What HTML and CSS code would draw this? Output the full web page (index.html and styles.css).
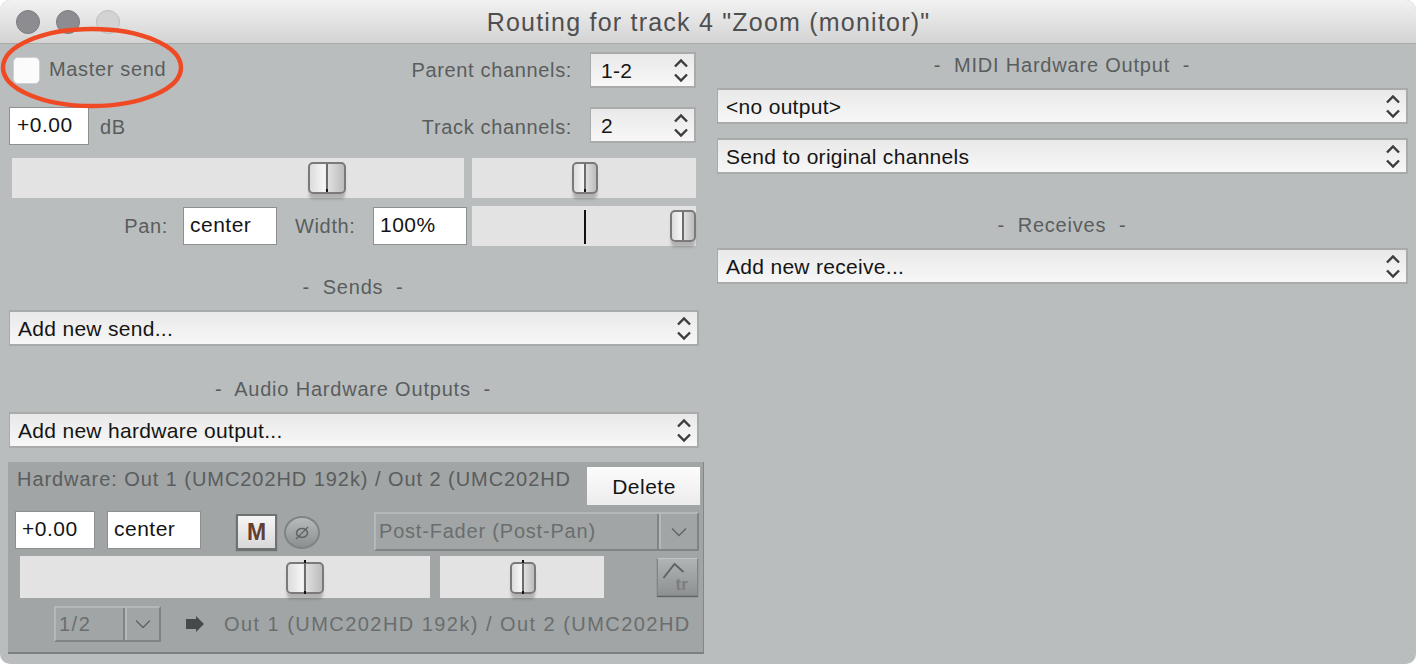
FILE: index.html
```html
<!DOCTYPE html>
<html lang="en">
<head>
    <meta charset="UTF-8">
    <title>Routing for track 4</title>
    <link rel="stylesheet" href="styles.css">
</head>
<body>
    <svg class="defs" width="0" height="0">
        <symbol id="updown" viewBox="0 0 16 26">
            <path d="M2 9.5 L8 3.5 L14 9.5 M2 17.5 L8 23.5 L14 17.5" fill="none" stroke="#3c3c3c" stroke-width="2.4"/>
        </symbol>
        <symbol id="chevron" viewBox="0 0 16 10">
            <path d="M1 1.5 L8 8.5 L15 1.5" fill="none" stroke="#5f6363" stroke-width="1.3"/>
        </symbol>
    </svg>

    <div class="window">
        <div class="titlebar">
            <div class="lights">
                <span class="light"></span>
                <span class="light"></span>
                <span class="light off"></span>
            </div>
            <div class="title">Routing for track 4 "Zoom (monitor)"</div>
        </div>

        <div class="columns">
            <div class="col-left">
                <div class="row row-master">
                    <span class="checkbox"></span>
                    <span class="label master-label">Master send</span>
                    <span class="label channels-label">Parent channels:</span>
                    <div class="select small">1-2<svg class="updown"><use href="#updown"/></svg></div>
                </div>
                <div class="row row-volume">
                    <span class="field vol">+0.00</span>
                    <span class="label db">dB</span>
                    <span class="label channels-label">Track channels:</span>
                    <div class="select small">2<svg class="updown"><use href="#updown"/></svg></div>
                </div>
                <div class="row row-faders">
                    <div class="fader volume"><span class="thumb wide thumb-vol"><i class="tick low"></i></span></div>
                    <div class="fader pan"><span class="thumb thumb-pan"><i class="tick low"></i></span></div>
                </div>
                <div class="row row-pan">
                    <span class="label pan-label">Pan:</span>
                    <span class="field pan-field">center</span>
                    <span class="label width-label">Width:</span>
                    <span class="field pan-field">100%</span>
                    <div class="fader width">
                        <span class="center-line"></span>
                        <span class="thumb thumb-width"></span>
                    </div>
                </div>

                <div class="heading sends">-&nbsp; Sends &nbsp;-</div>
                <div class="select wide-select">Add new send...<svg class="updown"><use href="#updown"/></svg></div>
                <div class="heading audio">-&nbsp; Audio Hardware Outputs &nbsp;-</div>
                <div class="select wide-select">Add new hardware output...<svg class="updown"><use href="#updown"/></svg></div>

                <div class="hw-panel">
                    <div class="hw-head">
                        <span class="label hw-title">Hardware: Out 1 (UMC202HD 192k) / Out 2 (UMC202HD</span>
                        <button class="delete">Delete</button>
                    </div>
                    <div class="hw-controls">
                        <span class="field hw-vol">+0.00</span>
                        <span class="field hw-pan">center</span>
                        <span class="mute">M</span>
                        <span class="phase">
                            <svg width="18" height="18" viewBox="0 0 18 18"><ellipse cx="9" cy="9" rx="5.5" ry="4.5" fill="none" stroke="#606464" stroke-width="1.6"/><path d="M3 15 L15 3" stroke="#606464" stroke-width="1.3"/></svg>
                        </span>
                        <div class="combo post">
                            <span class="combo-text">Post-Fader (Post-Pan)</span>
                            <span class="combo-arrow"><svg width="16" height="10"><use href="#chevron"/></svg></span>
                        </div>
                    </div>
                    <div class="hw-faders">
                        <div class="fader hw-volume"><span class="thumb wide thumb-hwvol"><i class="tick"></i></span></div>
                        <div class="fader hw-balance"><span class="thumb thumb-hwpan"><i class="tick"></i></span></div>
                        <span class="env-btn">
                            <svg width="32" height="34" viewBox="0 0 32 34">
                                <path d="M1.5 18 L12.5 4 L21.5 12" fill="none" stroke="#606464" stroke-width="2"/>
                                <text x="13.5" y="30" class="env-text">tr</text>
                            </svg>
                        </span>
                    </div>
                    <div class="hw-route">
                        <div class="combo channel">
                            <span class="combo-text">1/2</span>
                            <span class="combo-arrow"><svg width="16" height="10"><use href="#chevron"/></svg></span>
                        </div>
                        <svg class="arrow" width="18" height="16" viewBox="0 0 18 16"><path d="M0 3 H10 V0 L18 8 L10 16 V13 H0 Z" fill="#474a4a"/></svg>
                        <span class="route-text">Out 1 (UMC202HD 192k) / Out 2 (UMC202HD</span>
                    </div>
                </div>
            </div>

            <div class="col-right">
                <div class="heading midi">-&nbsp; MIDI Hardware Output &nbsp;-</div>
                <div class="select right-select first">&lt;no output&gt;<svg class="updown"><use href="#updown"/></svg></div>
                <div class="select right-select second">Send to original channels<svg class="updown"><use href="#updown"/></svg></div>
                <div class="heading receives">-&nbsp; Receives &nbsp;-</div>
                <div class="select right-select">Add new receive...<svg class="updown"><use href="#updown"/></svg></div>
            </div>
        </div>

        <!-- red marker drawn over the screenshot -->
        <svg class="marker" width="186" height="86" viewBox="0 0 186 86">
            <ellipse cx="92" cy="42.5" rx="89" ry="38.5" fill="none" stroke="#f04a24" stroke-width="4.5"/>
        </svg>
    </div>
</body>
</html>
```

FILE: styles.css
```css
* {
    box-sizing: border-box;
}
body {
    margin: 0;
    background-color: #ffffff;
    font-family: "Liberation Sans", Arial, sans-serif;
    font-size: 20px;
    letter-spacing: 0.65px;
}
.defs {
    position: absolute;
}
.window {
    position: relative;
    width: 1416px;
    height: 664px;
    overflow: hidden;
    border-radius: 10px;
    background-color: #b9bdbd;
}

/* title bar */
.titlebar {
    position: relative;
    height: 44px;
    background: linear-gradient(#f2f2f2, #d3d3d3);
    border-bottom: 1px solid #a9abab;
    display: flex;
    align-items: center;
    justify-content: center;
}
.lights {
    position: absolute;
    left: 16px;
    top: 10px;
    display: flex;
    gap: 16px;
}
.light {
    width: 24px;
    height: 24px;
    border-radius: 50%;
    background-color: #8d8d91;
    border: 1px solid #7c7c80;
}
.light.off {
    background-color: #d3d3d3;
    border-color: #bdbdbd;
}
.title {
    font-size: 25px;
    letter-spacing: 1.22px;
    color: #4f4f4f;
    padding-top: 1px;
    padding-left: 1px;
}

.columns {
    display: flex;
    padding-left: 8px;
    gap: 13px;
}
.col-left {
    width: 696px;
}
.col-right {
    width: 691px;
}

.row {
    display: flex;
}
.label {
    color: #5a5d5d;
}

/* inputs */
.field {
    display: block;
    height: 38px;
    line-height: 34px;
    padding-left: 6px;
    background-color: #ffffff;
    border: 1px solid #8d9090;
    color: #151515;
    font-size: 21px;
    letter-spacing: 0.5px;
}

/* stepper selects */
.select {
    position: relative;
    height: 36px;
    line-height: 33px;
    padding-left: 8px;
    background: linear-gradient(#e9e9e9, #f7f7f7);
    border: 2px solid #a9abab;
    border-width: 2px 2px 2px 1px;
    color: #151515;
    font-size: 21px;
    letter-spacing: 0.3px;
}
.updown {
    position: absolute;
    right: 5px;
    top: 3px;
    width: 16px;
    height: 26px;
}
.select.small {
    width: 106px;
    padding-left: 10px;
    flex-shrink: 0;
}
.wide-select {
    width: 690px;
    margin-left: 1px;
}
.right-select {
    width: 691px;
}
.right-select.first {
    margin-top: 11px;
}
.right-select.second {
    margin-top: 14px;
}

.heading {
    height: 24px;
    line-height: 24px;
    text-align: center;
    color: #5a5d5d;
    width: 690px;
    letter-spacing: 0.8px;
}
.heading.sends {
    margin-top: 29px;
    margin-bottom: 11px;
}
.heading.audio {
    margin-top: 31px;
    margin-bottom: 11px;
}
.heading.midi {
    margin-top: 9px;
}
.heading.receives {
    margin-top: 39px;
    margin-bottom: 11px;
}

/* top rows */
.row-master {
    height: 36px;
    margin-top: 8px;
    align-items: center;
    padding-left: 5px;
}
.checkbox {
    width: 27px;
    height: 27px;
    margin-top: 1px;
    border-radius: 5px;
    background-color: #fbfbfb;
    border: 1px solid #cfd1d1;
}
.master-label {
    margin-left: 9px;
    margin-bottom: 2px;
}
.channels-label {
    margin-left: auto;
    margin-right: 18px;
}
.row-master .select,
.row-volume .select {
    margin-right: 8px;
}
.row-volume {
    height: 38px;
    margin-top: 19px;
    padding-left: 1px;
}
.row-volume .channels-label {
    line-height: 40px;
}
.field.vol {
    width: 80px;
    padding-left: 7px;
}
.db {
    margin-left: 11px;
    line-height: 40px;
}
.row-faders {
    margin-top: 13px;
    padding-left: 4px;
    gap: 8px;
}
.row-pan {
    margin-top: 8px;
    align-items: center;
}
.pan-label {
    width: 160px;
    text-align: right;
}
.pan-field {
    width: 94px;
}
.pan-label + .pan-field {
    margin-left: 15px;
}
.width-label {
    width: 62px;
    margin-left: 18px;
    margin-right: 16px;
    white-space: nowrap;
}
.row-pan .fader {
    margin-left: 5px;
}

/* faders */
.fader {
    position: relative;
    height: 40px;
    background-color: #e3e3e3;
}
.fader.volume {
    width: 452px;
}
.fader.pan,
.fader.width {
    width: 224px;
}
.thumb {
    position: absolute;
    top: 4px;
    width: 26px;
    height: 32px;
    border: 2px solid #7a7a7a;
    border-radius: 5px;
    background: linear-gradient(90deg, #dcdcdc, #f6f6f6 42%, #e2e2e2 50%, #bcbcbc);
    box-shadow: 0 6px 3px -1px rgba(0, 0, 0, 0.22);
}
.thumb::after {
    content: "";
    position: absolute;
    left: 50%;
    top: 0;
    bottom: 0;
    width: 2px;
    margin-left: -1px;
    background-color: #6d6d6d;
}
.thumb.wide {
    width: 38px;
}
.thumb-vol {
    left: 296px;
}
.thumb-pan {
    left: 100px;
}
.thumb-width {
    right: 0;
}
.center-line {
    position: absolute;
    left: 112px;
    top: 4px;
    width: 2px;
    height: 34px;
    background-color: #111111;
}
.tick {
    position: absolute;
    left: 50%;
    top: -4px;
    bottom: -2px;
    width: 2px;
    margin-left: -1px;
    background: linear-gradient(#111111 0 3px, transparent 3px calc(100% - 3px), #111111 calc(100% - 3px));
    z-index: 1;
}
.tick.low {
    top: auto;
    bottom: 0;
    height: 3px;
    background: #111111;
}

/* hardware output panel */
.hw-panel {
    position: relative;
    height: 192px;
    margin-top: 14px;
    padding: 5px 3px 0 7px;
    background-color: #a1a5a5;
    border-right: 1px solid #858888;
    border-bottom: 2px solid #7b7f7f;
}
.hw-head {
    display: flex;
    justify-content: space-between;
    height: 38px;
}
.hw-title {
    padding-left: 2px;
    padding-top: 1px;
    letter-spacing: 0.94px;
    white-space: nowrap;
}
.delete {
    width: 113px;
    height: 38px;
    flex-shrink: 0;
    padding: 1px 0 0 1px;
    background: linear-gradient(#fcfcfc, #ececec);
    border: none;
    font-family: inherit;
    font-size: 21px;
    letter-spacing: 0.5px;
    color: #151515;
}
.hw-controls {
    display: flex;
    margin-top: 6px;
    height: 38px;
}
.hw-controls .field {
    line-height: 33px;
}
.hw-vol {
    width: 80px;
}
.hw-pan {
    width: 94px;
    margin-left: 12px;
}
.mute {
    width: 41px;
    height: 36px;
    margin-left: 35px;
    margin-top: 3px;
    border: 2px solid #6e7272;
    background: linear-gradient(#f6f6f6, #d8d8d8);
    text-align: center;
    line-height: 33px;
    font-weight: bold;
    font-size: 23px;
    letter-spacing: 0;
    color: #633e32;
    box-shadow: 0 1px 1px rgba(0, 0, 0, 0.3);
}
.phase {
    width: 36px;
    height: 33px;
    margin-left: 7px;
    margin-top: 5px;
    border-radius: 50%;
    border: 2px solid #7f8383;
    background: linear-gradient(#b7baba, #8b8f8f);
    display: flex;
    align-items: center;
    justify-content: center;
}
.combo {
    display: flex;
    height: 39px;
    border: 2px solid;
    border-color: #b4b8b8 #808484 #808484 #b4b8b8;
    color: #6a6e6e;
    letter-spacing: 0.8px;
}
.combo-text {
    flex: 1;
    line-height: 35px;
    padding-left: 3px;
    border-right: 2px solid #808484;
}
.combo-arrow {
    width: 38px;
    border-left: 2px solid #b4b8b8;
    display: flex;
    align-items: center;
    justify-content: center;
}
.combo.post {
    width: 325px;
    margin-left: 54px;
    margin-top: 1px;
}
.hw-faders {
    display: flex;
    margin-top: 7px;
    padding-left: 5px;
}
.fader.hw-volume {
    width: 410px;
    height: 42px;
}
.fader.hw-balance {
    width: 164px;
    height: 42px;
    margin-left: 10px;
}
.hw-faders .thumb {
    top: 6px;
}
.thumb-hwvol {
    left: 266px;
}
.thumb-hwpan {
    left: 70px;
}
.env-btn {
    width: 41px;
    height: 38px;
    margin-left: 53px;
    margin-top: 2px;
    border: 1px solid #808484;
    border-top-color: #c0c4c4;
    background: linear-gradient(#b0b4b4, #8d9191);
    box-shadow: 0 1px 1px rgba(0, 0, 0, 0.4);
    display: flex;
    align-items: center;
    justify-content: center;
}
.env-text {
    font-size: 17px;
    font-weight: bold;
    letter-spacing: 0;
    fill: #7a7e7e;
}
.hw-route {
    display: flex;
    align-items: center;
    margin-top: 8px;
    padding-left: 39px;
    white-space: nowrap;
}
.combo.channel {
    width: 107px;
    height: 36px;
    flex-shrink: 0;
    letter-spacing: 1.5px;
}
.combo.channel .combo-text {
    line-height: 32px;
}
.combo.channel .combo-arrow {
    width: 34px;
    flex-shrink: 0;
}
.arrow {
    margin-left: 25px;
    flex-shrink: 0;
}
.route-text {
    margin-left: 20px;
    color: #6a6e6e;
    letter-spacing: 1.45px;
}

.marker {
    position: absolute;
    left: 0;
    top: 25px;
}
```
